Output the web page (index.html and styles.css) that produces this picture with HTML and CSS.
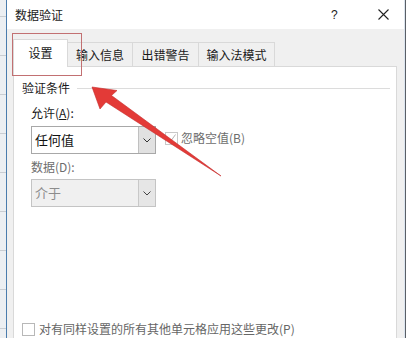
FILE: index.html
```html
<!DOCTYPE html>
<html lang="zh-CN">
<head>
<meta charset="utf-8">
<title>数据验证</title>
<link rel="stylesheet" href="styles.css">
</head>
<body>
<div class="sheet"></div>
<div class="dialog">
  <div class="titlebar">
    <span class="title">数据验证</span>
    <span class="help">?</span>
    <span class="close"><svg width="11" height="11" viewBox="0 0 11 11"><path d="M0.5 0.5L10.5 10.5M10.5 0.5L0.5 10.5" stroke="#222" stroke-width="1.1" fill="none"/></svg></span>
  </div>
  <div class="dbody">
    <div class="tabs">
      <div class="tab active">设置</div>
      <div class="tab t2">输入信息</div>
      <div class="tab t3">出错警告</div>
      <div class="tab t4">输入法模式</div>
    </div>
    <div class="panel">
      <div class="group-head"><span>验证条件</span><span class="rule"></span></div>
      <div class="fields">
        <div class="label">允许(<u>A</u>):</div>
        <div class="row">
          <div class="select">
            <span class="value">任何值</span>
            <span class="btn"><svg width="8" height="5" viewBox="0 0 8 5"><path d="M0.5 0.5L4 4L7.5 0.5" stroke="#333" stroke-width="1" fill="none"/></svg></span>
          </div>
          <span class="check disabled"><svg width="11" height="11" viewBox="0 0 11 11"><path d="M2 6L4.5 8.5L9.5 1.5" stroke="#b4b4b4" stroke-width="1" fill="none"/></svg></span>
          <span class="check-label dim">忽略空值(B)</span>
        </div>
        <div class="label dim second">数据(D):</div>
        <div class="select off">
          <span class="value">介于</span>
          <span class="btn"><svg width="8" height="5" viewBox="0 0 8 5"><path d="M0.5 0.5L4 4L7.5 0.5" stroke="#444" stroke-width="1" fill="none"/></svg></span>
        </div>
      </div>
      <div class="apply">
        <span class="check"></span>
        <span class="apply-label">对有同样设置的所有其他单元格应用这些更改(P)</span>
      </div>
    </div>
  </div>
</div>
<div class="edge"></div>
<div class="mark"></div>
<svg class="arrow" width="406" height="338" viewBox="0 0 406 338">
  <path d="M92 87 L117 90.5 L111.5 95.5 L221 176 L106 102 L100 109 Z" fill="#e33a37" stroke="#c42a2a" stroke-width="0.6" stroke-linejoin="round"/>
</svg>
</body>
</html>
```
FILE: styles.css
```css
* { box-sizing: border-box; }
html, body { margin: 0; padding: 0; }
body {
  width: 406px;
  height: 338px;
  overflow: hidden;
  display: flex;
  position: relative;
  font-family: "Noto Sans CJK SC", "Microsoft YaHei", "Noto Sans", sans-serif;
  font-size: 12px;
  color: #1a1a1a;
  background: #f0f0f0;
}
.sheet {
  width: 6px;
  flex: none;
  background: repeating-linear-gradient(to bottom, #eceff2 0, #eceff2 16px, #c9cdd2 16px, #c9cdd2 17px, #eceff2 17px, #eceff2 39px);
}
.dialog {
  width: 399px;
  flex: none;
  border-left: 1px solid #4a7cad;
  border-right: 1px solid #dce5ef;
  background: #f0f0f0;
  display: flex;
  flex-direction: column;
}
.edge { width: 1px; flex: none; background: #5a5f66; }
.titlebar {
  height: 29px;
  flex: none;
  background: #fff;
  display: flex;
  align-items: center;
  padding-left: 8px;
}
.title { flex: 1; line-height: 16px; margin-top: 1px; }
.help { width: 12px; font-size: 12px; line-height: 14px; margin-right: 35px; color: #222; font-family: "Liberation Sans", sans-serif; }
.close { width: 11px; height: 11px; margin-right: 15px; display: flex; margin-top: -1px; }
.dbody {
  padding: 10px 7px 0 6px;
  display: flex;
  flex-direction: column;
}
.tabs {
  display: flex;
  align-items: flex-end;
  height: 27px;
  position: relative;
  z-index: 1;
}
.tab {
  height: 24px;
  line-height: 23px;
  text-align: center;
  border-top: 1px solid #d9d9d9;
  border-right: 1px solid #d9d9d9;
  background: #f0f0f0;
  color: #1a1a1a;
}
.tab.active {
  width: 55px;
  height: 28px;
  margin-bottom: -1px;
  line-height: 26px;
  background: #fff;
  border-left: 1px solid #d9d9d9;
}
.t2 { width: 65px; }
.t3 { width: 66px; }
.t4 { width: 76px; }
.panel {
  background: #fff;
  border: 1px solid #d9d9d9;
  border-bottom: none;
  padding: 13px 6px 1px 8px;
}
.group-head {
  display: flex;
  align-items: center;
  height: 16px;
  line-height: 16px;
  gap: 7px;
}
.rule { flex: 1; height: 1px; background: #dcdcdc; }
.fields { padding-left: 9px; }
.label { margin-top: 9px; line-height: 16px; }
.label.second { margin-top: 5px; }
.dim { color: #6d6d6d; }
.row { display: flex; align-items: center; margin-top: 5px; }
.select {
  width: 125px;
  height: 28px;
  border: 1px solid #a8a8a8;
  background: #fff;
  display: flex;
  align-items: stretch;
  flex: none;
}
.select.off { margin-top: 4px; border-color: #c4c4c4; background: #f0f0f0; }
.value { flex: 1; padding-left: 3px; font-size: 13px; line-height: 26px; color: #111; }
.select.off .value { color: #8c8c8c; }
.btn {
  width: 17px;
  flex: none;
  background: #e1e1e1;
  border-left: 1px solid #c0c0c0;
  display: flex;
  align-items: center;
  justify-content: center;
}
.select.off .btn { background: #e6e6e6; border-left-color: #c8c8c8; }
.check {
  width: 13px;
  height: 13px;
  border: 1px solid #9a9a9a;
  background: #fff;
  display: inline-flex;
  align-items: center;
  justify-content: center;
  flex: none;
}
.check.disabled { border-color: #c8c8c8; margin-left: 9px; margin-top: -4px; }
.check-label { margin-left: 3px; line-height: 16px; margin-top: -4px; }
.apply {
  display: flex;
  align-items: center;
  margin-top: 114px;
  height: 16px;
}
.apply .check { border-color: #b8b8b8; }
.apply-label { margin-left: 4px; color: #666; line-height: 16px; }
.mark {
  position: absolute;
  left: 12px;
  top: 33px;
  width: 70px;
  height: 43px;
  border: 1px solid #c27072;
  z-index: 2;
}
.arrow {
  position: absolute;
  left: 0;
  top: 0;
  z-index: 3;
  pointer-events: none;
}
```
